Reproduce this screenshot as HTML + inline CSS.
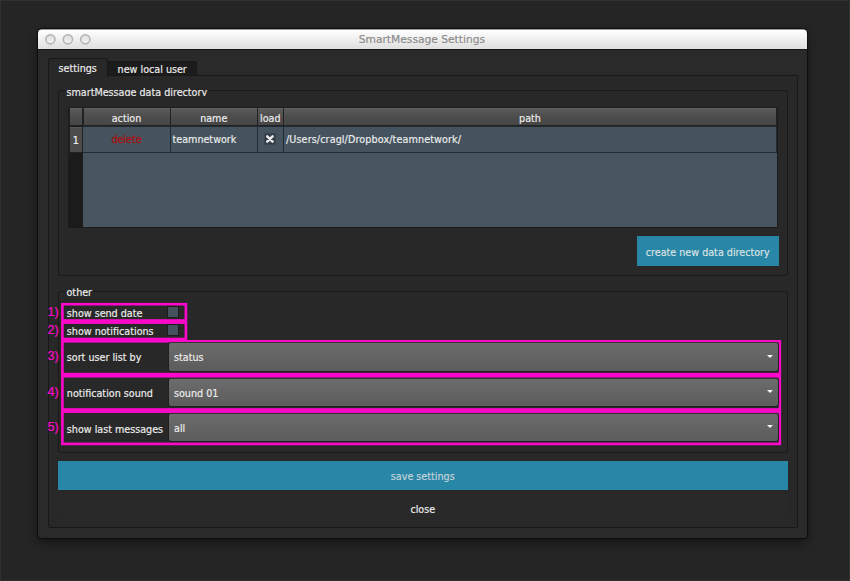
<!DOCTYPE html>
<html>
<head>
<meta charset="utf-8">
<title>SmartMessage Settings</title>
<style>
*{box-sizing:border-box;margin:0;padding:0}
html,body{width:850px;height:581px;overflow:hidden;background:#252525}
body{position:relative;font-family:"DejaVu Sans","Liberation Sans",sans-serif;font-size:9.6px;color:#ececec;-webkit-text-stroke:0.18px currentColor}
.abs{position:absolute}
#win{position:absolute;left:38px;top:29px;width:769.4px;height:509px;background:#2a2a2a;border-radius:4.5px 4.5px 3px 3px;box-shadow:0 5px 11px 0 rgba(0,0,0,.42),0 0 3px 0 rgba(0,0,0,.5),0 0 0 1px rgba(0,0,0,.38)}
#titlebar{position:absolute;left:0;top:0;width:100%;height:21px;border-radius:4.5px 4.5px 0 0;background:linear-gradient(#9a9a9a 0,#9a9a9a 1px,#ffffff 1px,#f1f1f1 45%,#dfdfdf 20px);border-bottom:1px solid #171717}
#title{position:absolute;left:-0.8px;width:100%;top:0.5px;text-align:center;font-size:10.7px;line-height:19.5px;color:#8a8a8a;-webkit-text-stroke:0.15px #8a8a8a}
.tl{position:absolute;top:4.8px;width:10.9px;height:10.9px;border-radius:50%;border:1.4px solid #a8a8a8;background:radial-gradient(circle at 50% 75%,#f6f6f6,#e2e2e2)}
.t{white-space:nowrap;position:absolute;line-height:12px}
#pane{position:absolute;left:48px;top:75px;width:749.5px;height:453px;border:1px solid #181818;background:#282828;border-radius:0 0 2px 2px}
.tab{position:absolute;border:1px solid #181818;border-bottom:none;border-radius:3px 3px 0 0}
.gb{position:absolute;border:1px solid #191919;border-radius:3px}
.gbt{position:absolute;background:#282828;padding:0 2px;white-space:nowrap;line-height:12px;overflow:hidden}
.hdr{position:absolute;background:linear-gradient(#5a5a5a,#4d4d4d 50%,#464646);border:1px solid #222222;border-top-color:#1b1b1b;box-shadow:inset 0 1px 0 #656565;text-align:center;line-height:22px;white-space:nowrap}
.cell{position:absolute;background:#45535e;white-space:nowrap;line-height:26px}
.ml{position:absolute;color:#ff08cc;font-family:"Liberation Sans",sans-serif;font-size:12.6px;line-height:14px;white-space:nowrap;-webkit-text-stroke:0.2px #ff08cc}
.combo{position:absolute;left:168px;width:611px;height:29.6px;border:1px solid #202020;border-top-color:#333;border-radius:3px;background:linear-gradient(#6c6c6c,#5c5c5c);line-height:29px;padding-left:5px;white-space:nowrap}
.combo:after{content:"";position:absolute;right:4.9px;top:11.7px;border-left:3px solid transparent;border-right:3px solid transparent;border-top:3.6px solid #f6f6f6}
.cb{position:absolute;width:11.4px;height:11.4px;background:#45525e;border:1px solid #1d1d1d}
</style>
</head>
<body>
<div class="abs" style="left:0;top:0;width:850px;height:581px;border:1px solid #313131;border-right-width:1.5px;z-index:50;pointer-events:none"></div>
<div id="win">
  <div id="titlebar">
    <svg class="abs" style="left:0;top:0" width="70" height="20" viewBox="0 0 70 20"><defs><linearGradient id="tg" x1="0" y1="0" x2="0" y2="1"><stop offset="0" stop-color="#dcdcdc"/><stop offset="1" stop-color="#f4f4f4"/></linearGradient></defs><g fill="url(#tg)" stroke="#b2b2b2" stroke-width="1.5"><circle cx="12.4" cy="10.3" r="4.6"/><circle cx="29.9" cy="10.3" r="4.6"/><circle cx="47.3" cy="10.3" r="4.6"/></g></svg>
    <div id="title">SmartMessage Settings</div>
  </div>
</div>

<!-- tabs -->
<div class="tab" style="left:107px;top:61px;width:90px;height:14.5px;background:#1c1c1c"></div>
<div id="pane"></div>
<div class="tab" style="left:48px;top:58px;width:59.5px;height:19px;background:#282828"></div>
<div class="t" style="left:58.6px;top:63px">settings</div>
<div class="t" style="left:117.6px;top:64px">new local user</div>

<!-- group 1 -->
<div class="gb" style="left:58px;top:90.3px;width:730px;height:185.7px"></div>
<div class="gbt" style="left:64.5px;top:86.5px;height:9.8px">smartMessage data directory</div>

<!-- table -->
<div class="abs" style="left:68px;top:106.5px;width:710px;height:121.5px;background:#1b1b1b"></div>
<div class="abs" style="left:82.5px;top:126px;width:694.5px;height:100.6px;background:#47555f"></div>
<div class="hdr" style="left:68.5px;top:107px;width:14.5px;height:19px"></div>
<div class="hdr" style="left:82.5px;top:107px;width:88px;height:19px">action</div>
<div class="hdr" style="left:170px;top:107px;width:87.5px;height:19px">name</div>
<div class="hdr" style="left:257px;top:107px;width:26.5px;height:19px">load</div>
<div class="hdr" style="left:283px;top:107px;width:494px;height:19px">path</div>
<div class="hdr" style="left:68.5px;top:126px;width:14.5px;height:26.7px;line-height:28px;background:#4c4c4c;box-shadow:inset 0 1px 0 #585858">1</div>
<div class="abs" style="left:82.5px;top:126px;width:694.5px;height:26.8px;background:#232b32"></div>
<div class="cell" style="left:83.3px;top:127px;width:86.4px;height:24.6px;text-align:center;color:#a61212;-webkit-text-stroke:0.3px #a61212">delete</div>
<div class="cell" style="left:171px;top:127px;width:85.6px;height:24.6px;padding-left:1.5px">teamnetwork</div>
<div class="cell" style="left:258px;top:127px;width:24.6px;height:24.6px"></div>
<div class="cell" style="left:284px;top:127px;width:492.3px;height:24.6px;padding-left:2px;letter-spacing:0.12px">/Users/cragl/Dropbox/teamnetwork/</div>
<svg class="abs" style="left:264px;top:133px" width="12" height="12" viewBox="0 0 12 12"><rect x="0.3" y="0.3" width="11.4" height="11.4" rx="2" fill="#323d47" stroke="#3b4751" stroke-width="0.8"/><path d="M3.2 3.3 L8.6 8.7 M8.6 3.3 L3.2 8.7" stroke="#ececec" stroke-width="2.5" stroke-linecap="round"/></svg>

<!-- create button -->
<div class="abs" style="left:637px;top:235px;width:141.5px;height:30.7px;background:#2887a7;color:#dce1e3;text-align:center;line-height:33px;white-space:nowrap;border-top:1px solid #2a2222">create new data directory</div>

<!-- group 2 -->
<div class="gb" style="left:58px;top:291px;width:730px;height:161.5px"></div>
<div class="gbt" style="left:64.5px;top:286.8px;height:12px">other</div>

<div class="ml" style="left:47.6px;top:304.5px">1)</div>
<div class="ml" style="left:47.6px;top:323px">2)</div>
<div class="ml" style="left:47.6px;top:348.6px">3)</div>
<div class="ml" style="left:47.6px;top:385px">4)</div>
<div class="ml" style="left:47.6px;top:420px">5)</div>


<svg class="abs" style="left:0;top:0" width="850" height="581" viewBox="0 0 850 581" fill="none" stroke="#ff08cc" stroke-width="2.6">
<rect x="62.4" y="304.2" width="123.5" height="16.3"/>
<rect x="62.4" y="322.6" width="123.5" height="16.4"/>
<rect x="62.4" y="341.3" width="717.4" height="32.8"/>
<rect x="62.4" y="376.2" width="717.4" height="33.3"/>
<rect x="62.4" y="411.6" width="717.4" height="32.3"/>
</svg>
<div class="t" style="left:66.8px;top:308px">show send date</div>
<div class="cb" style="left:167.2px;top:306.4px"></div>
<div class="t" style="left:66.8px;top:325.5px">show notifications</div>
<div class="cb" style="left:167.2px;top:324.3px"></div>

<div class="t" style="left:66.8px;top:352px">sort user list by</div>
<div class="combo" style="top:342.3px">status</div>
<div class="t" style="left:66.8px;top:388px">notification sound</div>
<div class="combo" style="top:377.6px">sound 01</div>
<div class="t" style="left:66.8px;top:423.5px">show last messages</div>
<div class="combo" style="top:412.8px">all</div>

<!-- save -->
<div class="abs" style="left:57.5px;top:460.5px;width:730.5px;height:29.5px;background:#2887a7;color:#c6d3da;text-align:center;line-height:31px">save settings</div>
<div class="abs" style="left:57.5px;top:495px;width:730.5px;height:23px;background:#292929;text-align:center;line-height:29px">close</div>
</body>
</html>
